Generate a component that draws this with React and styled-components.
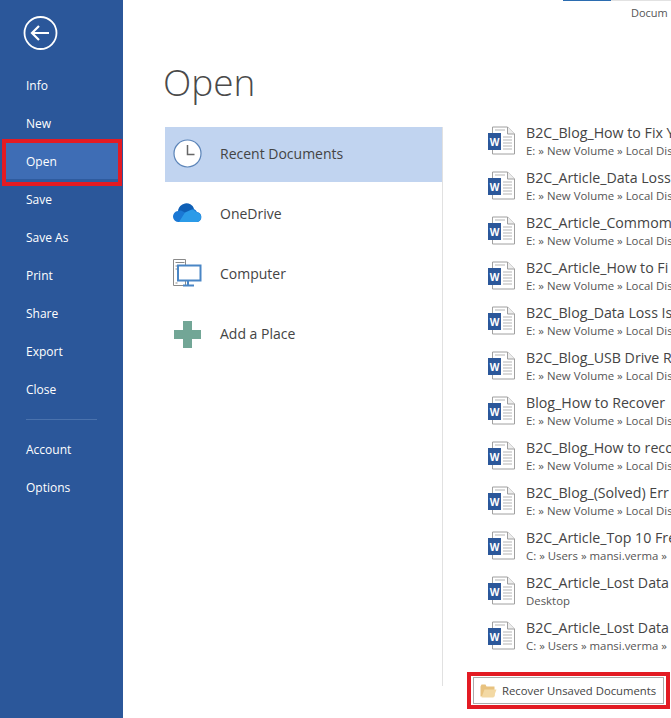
import React from "react";
import styled, { createGlobalStyle } from "styled-components";

const Global = createGlobalStyle`
  html, body { margin: 0; padding: 0; background: #fff; }
  body { font-family: "Open Sans", "Noto Sans", sans-serif; }
`;

const Page = styled.div`
  display: flex;
  width: 671px;
  height: 718px;
  overflow: hidden;
  background: #fff;
`;

const Sidebar = styled.nav`
  flex: 0 0 123px;
  box-sizing: border-box;
  background: #2b579a;
  padding-top: 15px;
  display: flex;
  flex-direction: column;
`;

const BackWrap = styled.div`
  padding-left: 23px;
  height: 52px;
`;

const NavList = styled.div`
  display: flex;
  flex-direction: column;
  margin-top: -1px;
`;

const NavItem = styled.div`
  position: relative;
  height: 38px;
  display: flex;
  align-items: center;
  padding-left: 26px;
  color: #fff;
  font-size: 12px;
  ${(p) =>
    p.$active &&
    `
    &::before {
      content: "";
      position: absolute;
      left: 2px;
      right: 1px;
      top: -3px;
      bottom: -6px;
      background: #3e6db5;
      border: 4px solid #e31b23;
      box-sizing: border-box;
      box-shadow: inset 0 -3px 0 #2f5b9e;
    }
  `}
`;

const NavLabel = styled.span`
  position: relative;
`;

const Rule = styled.div`
  height: 1px;
  background: #4a72ad;
  margin: 11px 26px 10px;
`;

const Main = styled.main`
  flex: 1;
  min-width: 0;
  display: flex;
  flex-direction: column;
  position: relative;
`;

const TabLine = styled.div`
  position: absolute;
  top: 0;
  left: 440px;
  width: 48px;
  height: 1px;
  background: #2b6cb0;
`;

const TabGrey = styled.div`
  position: absolute;
  top: 0;
  left: 488px;
  width: 60px;
  height: 1px;
  background: #e2e2e2;
`;

const TabLabel = styled.div`
  position: absolute;
  top: 5px;
  left: 508px;
  font-size: 11px;
  color: #555;
  white-space: nowrap;
`;

const Title = styled.h1`
  margin: 0;
  padding: 57px 0 0 40px;
  height: 127px;
  box-sizing: border-box;
  font-family: "Open Sans", sans-serif;
  font-weight: 300;
  font-size: 37px;
  line-height: 50px;
  color: #4a4a4a;
`;

const Content = styled.div`
  display: flex;
  height: 559px;
  padding-left: 42px;
`;

const Places = styled.div`
  flex: 0 0 278px;
  box-sizing: border-box;
  border-right: 1px solid #e1e1e1;
  display: flex;
  flex-direction: column;
  gap: 5px;
`;

const Place = styled.div`
  height: 55px;
  box-sizing: border-box;
  display: flex;
  align-items: center;
  padding: 0 0 2px 7px;
  gap: 17px;
  background: ${(p) => (p.$active ? "#c1d4f0" : "transparent")};
  font-size: 14px;
  color: #444;
`;

const PlaceIcon = styled.svg`
  width: 31px;
  height: 31px;
  flex: none;
`;

const Files = styled.div`
  flex: 1;
  min-width: 0;
  padding-left: 45px;
  margin-top: -8px;
  display: flex;
  flex-direction: column;
`;

const FileRow = styled.div`
  height: 45px;
  display: flex;
  align-items: center;
  gap: 11px;
  white-space: nowrap;
  overflow: hidden;
`;

const WordSvg = styled.svg`
  flex: none;
  margin-top: -3px;
`;

const FileText = styled.div`
  display: flex;
  flex-direction: column;
  gap: 1px;
  min-width: 0;
  margin-top: -1px;
`;

const FileName = styled.div`
  font-size: 14.2px;
  line-height: 18px;
  color: #444;
`;

const FilePath = styled.div`
  font-size: 11.4px;
  line-height: 15px;
  color: #555;
`;

const RecoverOutline = styled.div`
  position: absolute;
  left: 344px;
  top: 672px;
  width: 203px;
  height: 37px;
  box-sizing: border-box;
  border: 4px solid #e31b23;
  padding: 1px 2px;
`;

const RecoverButton = styled.div`
  height: 100%;
  box-sizing: border-box;
  border: 1px solid #ababab;
  display: flex;
  align-items: center;
  gap: 5px;
  padding-left: 6px;
  font-size: 11.3px;
  color: #444;
  white-space: nowrap;
`;

const BackIcon = () => (
  <svg width="36" height="36" viewBox="0 0 36 36" fill="none" stroke="#fff">
    <circle cx="17.5" cy="18" r="16" strokeWidth="1.8" />
    <path d="M9.5 18H26M16 11l-7 7 7 7" strokeWidth="2.2" />
  </svg>
);

const ClockIcon = () => (
  <PlaceIcon viewBox="0 0 31 31">
    <circle cx="15.5" cy="15.5" r="13.5" fill="#fff" stroke="#5b84b8" strokeWidth="1.2" />
    <path d="M15.5 7v9.5h7" fill="none" stroke="#666" strokeWidth="1.5" />
  </PlaceIcon>
);

const CloudIcon = () => (
  <PlaceIcon viewBox="0 0 31 31">
    <path d="M7 24a5.500 5.500 0 0 1-1-11 9 9 0 0 1 16-2 6 6 0 0 1 3 3 5.200 5.200 0 0 1 1 10z" fill="#1a78d4" />
    <path d="M13 14.500a6.500 6.500 0 0 1 11-.500 5.200 5.200 0 0 1 5 5c0 3-2 5-5 5H7z" fill="#2b9be8" />
    <path d="M6 12.800a9 9 0 0 1 7-7.300 8 8 0 0 1 9 5l-9 4-4-2z" fill="#0f5fb5" />
  </PlaceIcon>
);

const ComputerIcon = () => (
  <PlaceIcon viewBox="0 0 31 31">
    <path d="M1.500 1.500h12v26h-12z" fill="#fff" stroke="#8a8a8a" />
    <path d="M3.500 4.500h9M3.500 8h6M3.500 11h3M3.500 25h2" stroke="#8a8a8a" />
    <rect x="6" y="7.500" width="22.500" height="15" fill="#fff" stroke="#4a86c5" strokeWidth="2" />
    <path d="M16 23v3.500M11 27.500h11" stroke="#4a86c5" strokeWidth="2" />
  </PlaceIcon>
);

const PlusIcon = () => (
  <PlaceIcon viewBox="0 0 31 31">
    <path d="M11 3h9v9h9v9h-9v9h-9v-9H2v-9h9z" fill="#72a696" />
  </PlaceIcon>
);

const WordIcon = () => (
  <WordSvg width="27" height="29" viewBox="0 0 27 29">
    <path d="M4.500 1h15l7 7v20h-22z" fill="#fff" stroke="#a0a0a0" />
    <path d="M19.500 1v7h7" fill="#eee" stroke="#a0a0a0" />
    <path d="M15 11h9M15 14h9M15 17h9M15 20h9M15 23h9M7 4h10" stroke="#b5b5b5" />
    <rect x="0" y="7" width="13" height="17" fill="#2b579a" />
    <text x="6.500" y="19.500" textAnchor="middle" fontSize="10" fontWeight="700" fill="#fff" fontFamily="'Open Sans',sans-serif">W</text>
  </WordSvg>
);

const FolderIcon = () => (
  <svg width="17" height="14" viewBox="0 0 17 14">
    <path d="M0.500 2.500l1-2h4l1 2h8v10h-14z" fill="#e8c27f" />
    <path d="M1.500 13.500l3-8h12l-3 8z" fill="#f3d9a4" />
  </svg>
);

const nav = ["Info", "New", "Open", "Save", "Save As", "Print", "Share", "Export", "Close"];
const nav2 = ["Account", "Options"];

const places = [
  { label: "Recent Documents", icon: <ClockIcon />, active: true },
  { label: "OneDrive", icon: <CloudIcon /> },
  { label: "Computer", icon: <ComputerIcon /> },
  { label: "Add a Place", icon: <PlusIcon /> },
];

const E = "E: » New Volume » Local Dis";
const C = "C: » Users » mansi.verma » ";
const files = [
  ["B2C_Blog_How to Fix Y", E],
  ["B2C_Article_Data Loss", E],
  ["B2C_Article_Commom", E],
  ["B2C_Article_How to Fi", E],
  ["B2C_Blog_Data Loss Is", E],
  ["B2C_Blog_USB Drive R", E],
  ["Blog_How to Recover", E],
  ["B2C_Blog_How to reco", E],
  ["B2C_Blog_(Solved) Err", E],
  ["B2C_Article_Top 10 Fre", C],
  ["B2C_Article_Lost Data", "Desktop"],
  ["B2C_Article_Lost Data", C],
];

export default function App() {
  return (
    <Page>
      <Global />
      <Sidebar>
        <BackWrap>
          <BackIcon />
        </BackWrap>
        <NavList>
          {nav.map((n) => (
            <NavItem key={n} $active={n === "Open"}>
              <NavLabel>{n}</NavLabel>
            </NavItem>
          ))}
          <Rule />
          {nav2.map((n) => (
            <NavItem key={n}>
              <NavLabel>{n}</NavLabel>
            </NavItem>
          ))}
        </NavList>
      </Sidebar>
      <Main>
        <TabLine />
        <TabGrey />
        <TabLabel>Docum</TabLabel>
        <Title>Open</Title>
        <Content>
          <Places>
            {places.map((p) => (
              <Place key={p.label} $active={p.active}>
                {p.icon}
                <span>{p.label}</span>
              </Place>
            ))}
          </Places>
          <Files>
            {files.map(([t, s], i) => (
              <FileRow key={i}>
                <WordIcon />
                <FileText>
                  <FileName>{t}</FileName>
                  <FilePath>{s}</FilePath>
                </FileText>
              </FileRow>
            ))}
          </Files>
        </Content>
        <RecoverOutline>
          <RecoverButton>
            <FolderIcon />
            Recover Unsaved Documents
          </RecoverButton>
        </RecoverOutline>
      </Main>
    </Page>
  );
}
